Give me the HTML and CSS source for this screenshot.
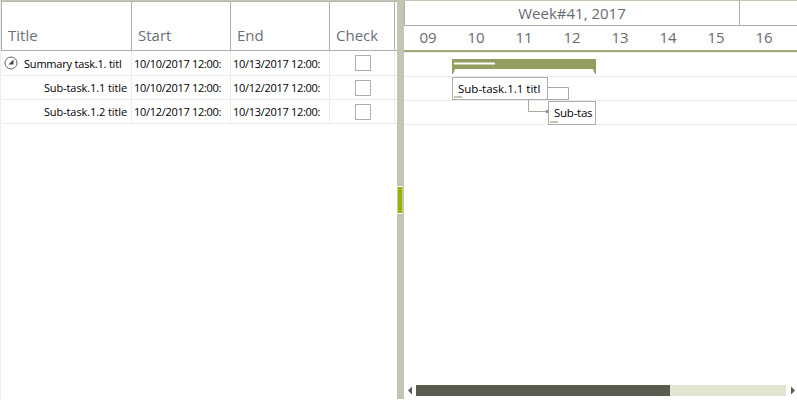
FILE: index.html
```html
<!DOCTYPE html>
<html lang="en">
<head>
<meta charset="utf-8">
<title>Gantt</title>
<link rel="stylesheet" href="styles.css">
</head>
<body>
<div class="gantt">
  <section class="grid">
    <div class="row head">
      <div class="hc">Title</div>
      <div class="hc">Start</div>
      <div class="hc">End</div>
      <div class="hc">Check</div>
    </div>
    <div class="row">
      <div class="cell title">
        <svg class="toggle" width="14" height="14" viewBox="0 0 14 14"><circle cx="7" cy="7" r="6" fill="none" stroke="#666" stroke-width="1"/><path d="M4.5 8.5H9.5V3.5Z" fill="#444"/></svg>
        <span>Summary task.1. titl</span>
      </div>
      <div class="cell date">10/10/2017 12:00:</div>
      <div class="cell date">10/13/2017 12:00:</div>
      <div class="cell boxed"><span class="check"></span></div>
    </div>
    <div class="row">
      <div class="cell sub">Sub-task.1.1 title</div>
      <div class="cell date">10/10/2017 12:00:</div>
      <div class="cell date">10/12/2017 12:00:</div>
      <div class="cell boxed"><span class="check"></span></div>
    </div>
    <div class="row">
      <div class="cell sub">Sub-task.1.2 title</div>
      <div class="cell date">10/12/2017 12:00:</div>
      <div class="cell date">10/13/2017 12:00:</div>
      <div class="cell boxed"><span class="check"></span></div>
    </div>
  </section>
  <div class="splitter"><span class="grip"></span></div>
  <section class="timeline">
    <div class="weeks">
      <div class="week">Week#41, 2017</div>
      <div class="week-next"></div>
    </div>
    <div class="days">
      <span>09</span><span>10</span><span>11</span><span>12</span><span>13</span><span>14</span><span>15</span><span>16</span>
    </div>
    <div class="chart">
      <div class="trow"></div>
      <div class="trow"></div>
      <div class="trow"></div>
      <svg class="links" width="393" height="90" viewBox="0 0 393 90">
        <path d="M48 7H192V22H191L189 17H51L49 22H48Z" fill="#959c5f"/>
        <path d="M50 11.5H91" stroke="#fff" stroke-width="2" fill="none"/>
        <path d="M144 35.5H164.5V47.5H144" stroke="#a9a99f" fill="none"/>
        <path d="M124.5 47V59.5H142" stroke="#a9a99f" fill="none"/>
        <rect x="142" y="58" width="2" height="3" fill="#8f8f85"/>
      </svg>
      <div class="task t1">Sub-task.1.1 titl<i class="prog"></i></div>
      <div class="task t2">Sub-tas<i class="prog"></i></div>
    </div>
    <div class="scroll">
      <svg width="5" height="9" viewBox="0 0 5 9"><path d="M0 4.5L4 0.5V8.5Z" fill="#5a5c50"/></svg>
      <div class="track"><div class="thumb"></div></div>
      <svg width="5" height="9" viewBox="0 0 5 9"><path d="M5 4.5L1 0.5V8.5Z" fill="#5a5c50"/></svg>
    </div>
  </section>
</div>
</body>
</html>
```

FILE: styles.css
```css
* { box-sizing: border-box; }
html, body { margin: 0; padding: 0; background: #fff; overflow: hidden; }
body { width: 797px; height: 402px; font-family: "Open Sans", "Noto Sans", sans-serif; }

.gantt { display: flex; width: 797px; height: 399px; border-top: 1px solid #c4c6b4; }

.grid { width: 397px; padding-left: 1px; border-left: 1px solid #ececec; }
.row {
  display: grid;
  grid-template-columns: 130px 99px 99px 65px;
  height: 24px;
  border-bottom: 1px solid #ececec;
}
.row:nth-child(2) { height: 25px; }
.head {
  height: 50px;
  border-top: 1px solid #b5b5b5;
  border-bottom: 1px solid #aeaeae;
  margin-left: -1px;
  padding-left: 0;
  border-left: 1px solid #aeaeae;
  grid-template-columns: 130px 99px 99px 65px;
}
.hc {
  display: flex;
  align-items: flex-end;
  padding: 0 0 5px 6px;
  font-size: 15px;
  line-height: 20px;
  color: #6b6f78;
  border-right: 1px solid #aeaeae;
}
.cell {
  display: flex;
  align-items: center;
  font-size: 11px;
  color: #000;
  padding-left: 3px;
  white-space: nowrap;
  overflow: hidden;
  border-right: 1px solid #ececec;
  letter-spacing: -0.2px;
}
.date { padding-left: 2px; letter-spacing: -0.3px; }
.sub { justify-content: flex-end; padding-right: 4px; letter-spacing: -0.1px; }
.toggle { margin: 0 6px 0 -1px; flex: none; }
.boxed { justify-content: center; padding-left: 2px; }
.check { width: 16px; height: 16px; border: 1px solid #aeaeae; background: #fff; }

.splitter {
  position: relative;
  width: 7px;
  background: #c4c6b4;
  display: flex;
  align-items: center;
}
.grip {
  display: block;
  width: 6px;
  height: 28px;
  margin-top: -1px;
  background: #94b800;
  border-top: 1px solid #fff;
  border-bottom: 1px solid #fff;
  border-right: 1px solid #c4c6b4;
  border-left: 1px solid #c4c6b4;
}

.timeline { flex: 1; display: flex; flex-direction: column; min-width: 0; }
.weeks { display: flex; height: 25px; border-bottom: 1px solid #aeaeae; flex: none; }
.week {
  width: 336px;
  border-left: 1px solid #aeaeae;
  border-right: 1px solid #aeaeae;
  text-align: center;
  font-size: 15px;
  line-height: 24px;
  color: #666a72;
}
.week-next { flex: 1; }
.days {
  display: flex;
  height: 26px;
  flex: none;
  border-bottom: 2px solid #a3a87a;
  box-shadow: 0 1px 0 #ececec;
}
.days span {
  width: 48px;
  flex: none;
  text-align: center;
  font-size: 15px;
  line-height: 22px;
  color: #666a72;
}
.chart { position: relative; flex: 1; min-height: 0; }
.trow { height: 24px; border-bottom: 1px solid #ececec; }
.trow:first-child { height: 25px; }
.links { position: absolute; left: 0; top: 0; }
.task {
  position: absolute;
  background: #fff;
  border: 1px solid #aeaeae;
  font-size: 11.5px;
  line-height: 22px;
  color: #000;
  padding-left: 5px;
  white-space: nowrap;
  overflow: hidden;
}
.t1 { left: 48px; top: 25px; width: 96px; height: 23px; }
.t2 { left: 144px; top: 49px; width: 48px; height: 24px; letter-spacing: -0.25px; }
.prog {
  position: absolute;
  left: 1px;
  bottom: 1px;
  width: 8px;
  height: 2px;
  background: #c4c6b4;
}

.scroll {
  display: flex;
  align-items: center;
  height: 11px;
  margin-bottom: 3px;
  padding: 0 2px 0 4px;
  gap: 4px;
  flex: none;
}
.scroll svg { flex: none; }
.track { width: 371px; height: 11px; background: #e2e5d2; margin-left: -1px; }
.thumb { width: 254px; height: 11px; background: #5a5c50; }
```
